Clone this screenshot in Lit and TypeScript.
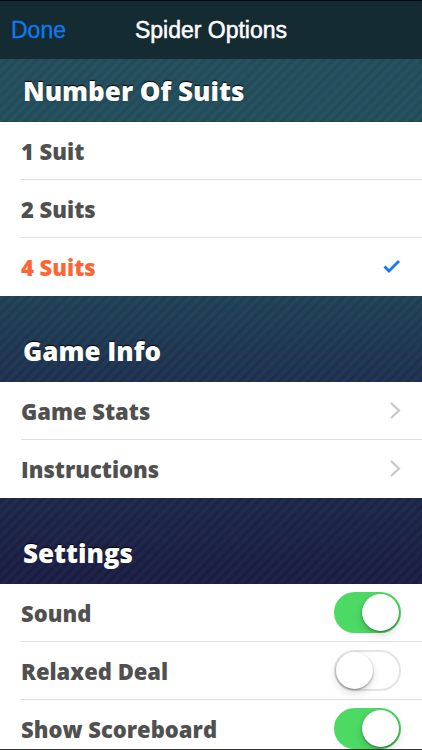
import { LitElement, html, css, svg } from "lit";
import { customElement, state } from "lit/decorators.js";

const chevron = svg`<path d="M2 2 L10 9.5 L2 17" fill="none" stroke="#c7c7cc" stroke-width="2.2" />`;
const tick = svg`<path d="M1.5 7.5 L6 12 L16 2" fill="none" stroke="#0f79f0" stroke-width="2.8" />`;

@customElement("app-root")
export class AppRoot extends LitElement {
  @state() private suits = "4 Suits";
  @state() private settings = [
    { name: "Sound", on: true },
    { name: "Relaxed Deal", on: false },
    { name: "Show Scoreboard", on: true },
  ];

  static styles = css`
    :host {
      display: flex;
      flex-direction: column;
      height: 100vh;
      box-sizing: border-box;
      overflow: hidden;
      border-top: 1px solid #020b0f;
      border-bottom: 1px solid #333;
      background:
        repeating-linear-gradient(
          135deg,
          rgba(255, 255, 255, 0.03) 0px,
          rgba(255, 255, 255, 0.03) 2px,
          rgba(255, 255, 255, 0) 4px,
          rgba(255, 255, 255, 0) 5px,
          rgba(255, 255, 255, 0.03) 7px
        ),
        linear-gradient(#204b5a 0%, #204b5a 15%, #1e4054 39%, #1b2d4d 52%, #1a2647 66%, #191b41 78%, #191b41 100%);
      font-family: "Open Sans", "Noto Sans", sans-serif;
    }
    .bar {
      flex: none;
      display: grid;
      grid-template-columns: 1fr auto 1fr;
      align-items: center;
      height: 58px;
      padding: 0 11px;
      background: #152b32;
      font-family: "Liberation Sans", Arial, sans-serif;
      font-size: 23px;
    }
    .done {
      justify-self: start;
      padding: 0;
      border: 0;
      background: none;
      color: #0f79f0;
      font: inherit;
      -webkit-text-stroke: 0.3px #0f79f0;
    }
    .title {
      margin: 0;
      font: inherit;
      color: #fff;
      -webkit-text-stroke: 0.5px #fff;
    }
    .content {
      flex: 1;
      min-height: 0;
      overflow-y: auto;
      scrollbar-width: none;
    }
    h2 {
      margin: 0;
      padding: 39px 23px 15px;
      color: #fff;
      font-size: 26px;
      line-height: 32px;
      font-weight: 800;
      text-shadow: 0 -1px 1px #000;
    }
    .first {
      padding-top: 16px;
    }
    .group {
      background: #fff;
    }
    .row {
      display: flex;
      align-items: center;
      justify-content: space-between;
      box-sizing: border-box;
      width: calc(100% - 21px);
      height: 58px;
      margin: 0 0 0 21px;
      padding: 0 21px 0 0;
      border: 0;
      border-bottom: 1px solid #e0e0e0;
      background: none;
      color: #505050;
      font-size: 22px;
      font-weight: 800;
      text-decoration: none;
    }
    .row:last-child {
      border-bottom-color: transparent;
    }
    .chosen {
      color: #ff6534;
    }
    .radio {
      appearance: none;
      width: 0;
      height: 0;
      margin: 0;
    }
    .name {
      flex: 1;
    }
    .switch {
      appearance: none;
      display: flex;
      box-sizing: border-box;
      width: 67px;
      height: 41px;
      margin: 0;
      padding: 0;
      border: 2px solid #e4e4e4;
      border-radius: 21px;
      background: #fff;
    }
    .switch::before {
      content: "";
      width: 37px;
      height: 37px;
      border-radius: 50%;
      background: #fff;
      box-shadow: 0 1px 2px rgba(0, 0, 0, 0.4), 0 4px 8px rgba(0, 0, 0, 0.15);
    }
    .switch:checked {
      justify-content: flex-end;
      border-color: #4cd964;
      background: #4cd964;
    }
  `;

  private toggle(index: number) {
    this.settings = this.settings.map((s, i) => (i === index ? { ...s, on: !s.on } : s));
  }

  render() {
    return html`
      <header class="bar">
        <button class="done">Done</button>
        <h1 class="title">Spider Options</h1>
      </header>
      <main class="content">
        <h2 class="first">Number Of Suits</h2>
        <div class="group">
          ${["1 Suit", "2 Suits", "4 Suits"].map(
            (name) => html`
              <label class="row ${name === this.suits ? "chosen" : ""}">
                <input class="radio" type="radio" name="suits" .checked=${name === this.suits}
                  @change=${() => (this.suits = name)} />
                <span class="name">${name}</span>
                ${name === this.suits
                  ? html`<svg width="18" height="15" viewBox="0 0 18 15" aria-hidden="true">${tick}</svg>`
                  : ""}
              </label>
            `
          )}
        </div>
        <h2>Game Info</h2>
        <nav class="group">
          ${["Game Stats", "Instructions"].map(
            (name) => html`
              <a class="row" href="#">
                <span class="name">${name}</span>
                <svg width="12" height="19" viewBox="0 0 12 19" aria-hidden="true">${chevron}</svg>
              </a>
            `
          )}
        </nav>
        <h2>Settings</h2>
        <div class="group">
          ${this.settings.map(
            (s, i) => html`
              <label class="row">
                <span class="name">${s.name}</span>
                <input class="switch" type="checkbox" .checked=${s.on} @change=${() => this.toggle(i)} />
              </label>
            `
          )}
        </div>
      </main>
    `;
  }
}
